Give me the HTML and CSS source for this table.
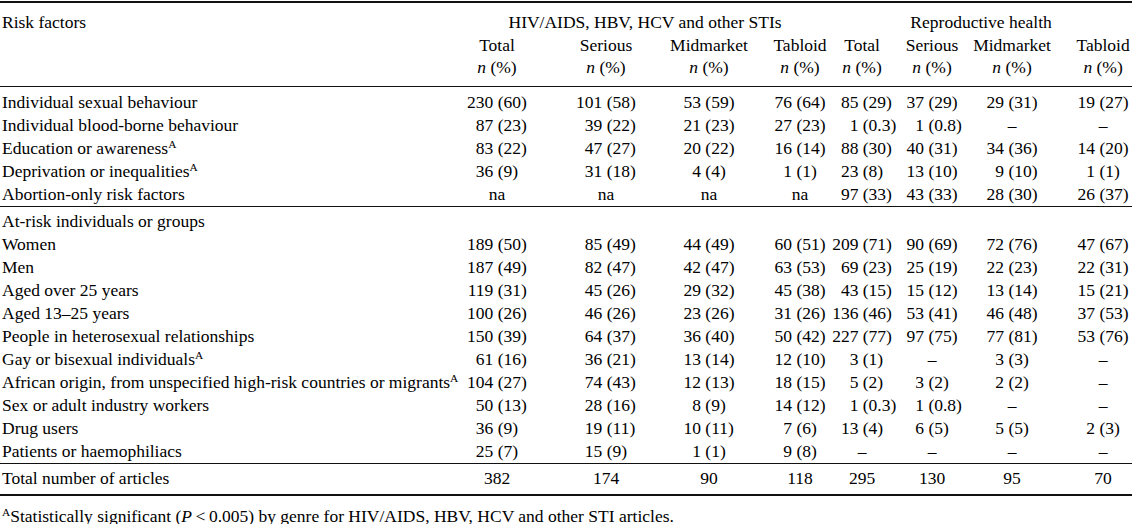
FILE: index.html
```html
<!DOCTYPE html>
<html>
<head>
<meta charset="utf-8">
<link rel="stylesheet" href="styles.css">
</head>
<body>
<table class="t">
<colgroup>
<col class="c0"><col class="c1"><col class="c2"><col class="c3"><col class="c4"><col class="c5"><col class="c6"><col class="c7"><col class="c8">
</colgroup>
<thead>
<tr class="h1">
<th class="lab">Risk factors</th>
<th colspan="4" class="grp">HIV/AIDS, HBV, HCV and other STIs</th>
<th colspan="4" class="grp">Reproductive health</th>
</tr>
<tr class="d h2">
<th></th><th>Total</th><th>Serious</th><th>Midmarket</th><th>Tabloid</th><th>Total</th><th>Serious</th><th>Midmarket</th><th>Tabloid</th>
</tr>
<tr class="d h3">
<th></th><th><i>n</i> (%)</th><th><i>n</i> (%)</th><th><i>n</i> (%)</th><th><i>n</i> (%)</th><th><i>n</i> (%)</th><th><i>n</i> (%)</th><th><i>n</i> (%)</th><th><i>n</i> (%)</th>
</tr>
</thead>
<tbody class="s1">
<tr class="d first">
<td>Individual sexual behaviour</td>
<td><span class="v"><span class="n">230</span><span class="p">(60)</span></span></td>
<td><span class="v"><span class="n">101</span><span class="p">(58)</span></span></td>
<td><span class="v"><span class="n">53</span><span class="p">(59)</span></span></td>
<td><span class="v"><span class="n">76</span><span class="p">(64)</span></span></td>
<td><span class="v"><span class="n">85</span><span class="p">(29)</span></span></td>
<td><span class="v"><span class="n">37</span><span class="p">(29)</span></span></td>
<td><span class="v"><span class="n">29</span><span class="p">(31)</span></span></td>
<td><span class="v"><span class="n">19</span><span class="p">(27)</span></span></td>
</tr>
<tr class="d">
<td>Individual blood-borne behaviour</td>
<td><span class="v"><span class="n">87</span><span class="p">(23)</span></span></td>
<td><span class="v"><span class="n">39</span><span class="p">(22)</span></span></td>
<td><span class="v"><span class="n">21</span><span class="p">(23)</span></span></td>
<td><span class="v"><span class="n">27</span><span class="p">(23)</span></span></td>
<td><span class="v"><span class="n">1</span><span class="p">(0.3)</span></span></td>
<td><span class="v"><span class="n">1</span><span class="p">(0.8)</span></span></td>
<td>–</td>
<td>–</td>
</tr>
<tr class="d">
<td>Education or awareness<sup>A</sup></td>
<td><span class="v"><span class="n">83</span><span class="p">(22)</span></span></td>
<td><span class="v"><span class="n">47</span><span class="p">(27)</span></span></td>
<td><span class="v"><span class="n">20</span><span class="p">(22)</span></span></td>
<td><span class="v"><span class="n">16</span><span class="p">(14)</span></span></td>
<td><span class="v"><span class="n">88</span><span class="p">(30)</span></span></td>
<td><span class="v"><span class="n">40</span><span class="p">(31)</span></span></td>
<td><span class="v"><span class="n">34</span><span class="p">(36)</span></span></td>
<td><span class="v"><span class="n">14</span><span class="p">(20)</span></span></td>
</tr>
<tr class="d">
<td>Deprivation or inequalities<sup>A</sup></td>
<td><span class="v"><span class="n">36</span><span class="p">(9)</span></span></td>
<td><span class="v"><span class="n">31</span><span class="p">(18)</span></span></td>
<td><span class="v"><span class="n">4</span><span class="p">(4)</span></span></td>
<td><span class="v"><span class="n">1</span><span class="p">(1)</span></span></td>
<td><span class="v"><span class="n">23</span><span class="p">(8)</span></span></td>
<td><span class="v"><span class="n">13</span><span class="p">(10)</span></span></td>
<td><span class="v"><span class="n">9</span><span class="p">(10)</span></span></td>
<td><span class="v"><span class="n">1</span><span class="p">(1)</span></span></td>
</tr>
<tr class="d">
<td>Abortion-only risk factors</td>
<td>na</td>
<td>na</td>
<td>na</td>
<td>na</td>
<td><span class="v"><span class="n">97</span><span class="p">(33)</span></span></td>
<td><span class="v"><span class="n">43</span><span class="p">(33)</span></span></td>
<td><span class="v"><span class="n">28</span><span class="p">(30)</span></span></td>
<td><span class="v"><span class="n">26</span><span class="p">(37)</span></span></td>
</tr>
</tbody>
<tbody class="s2">
<tr class="d first">
<td>At-risk individuals or groups</td>
<td></td><td></td><td></td><td></td><td></td><td></td><td></td><td></td>
</tr>
<tr class="d">
<td>Women</td>
<td><span class="v"><span class="n">189</span><span class="p">(50)</span></span></td>
<td><span class="v"><span class="n">85</span><span class="p">(49)</span></span></td>
<td><span class="v"><span class="n">44</span><span class="p">(49)</span></span></td>
<td><span class="v"><span class="n">60</span><span class="p">(51)</span></span></td>
<td><span class="v"><span class="n">209</span><span class="p">(71)</span></span></td>
<td><span class="v"><span class="n">90</span><span class="p">(69)</span></span></td>
<td><span class="v"><span class="n">72</span><span class="p">(76)</span></span></td>
<td><span class="v"><span class="n">47</span><span class="p">(67)</span></span></td>
</tr>
<tr class="d">
<td>Men</td>
<td><span class="v"><span class="n">187</span><span class="p">(49)</span></span></td>
<td><span class="v"><span class="n">82</span><span class="p">(47)</span></span></td>
<td><span class="v"><span class="n">42</span><span class="p">(47)</span></span></td>
<td><span class="v"><span class="n">63</span><span class="p">(53)</span></span></td>
<td><span class="v"><span class="n">69</span><span class="p">(23)</span></span></td>
<td><span class="v"><span class="n">25</span><span class="p">(19)</span></span></td>
<td><span class="v"><span class="n">22</span><span class="p">(23)</span></span></td>
<td><span class="v"><span class="n">22</span><span class="p">(31)</span></span></td>
</tr>
<tr class="d">
<td>Aged over 25 years</td>
<td><span class="v"><span class="n">119</span><span class="p">(31)</span></span></td>
<td><span class="v"><span class="n">45</span><span class="p">(26)</span></span></td>
<td><span class="v"><span class="n">29</span><span class="p">(32)</span></span></td>
<td><span class="v"><span class="n">45</span><span class="p">(38)</span></span></td>
<td><span class="v"><span class="n">43</span><span class="p">(15)</span></span></td>
<td><span class="v"><span class="n">15</span><span class="p">(12)</span></span></td>
<td><span class="v"><span class="n">13</span><span class="p">(14)</span></span></td>
<td><span class="v"><span class="n">15</span><span class="p">(21)</span></span></td>
</tr>
<tr class="d">
<td>Aged 13–25 years</td>
<td><span class="v"><span class="n">100</span><span class="p">(26)</span></span></td>
<td><span class="v"><span class="n">46</span><span class="p">(26)</span></span></td>
<td><span class="v"><span class="n">23</span><span class="p">(26)</span></span></td>
<td><span class="v"><span class="n">31</span><span class="p">(26)</span></span></td>
<td><span class="v"><span class="n">136</span><span class="p">(46)</span></span></td>
<td><span class="v"><span class="n">53</span><span class="p">(41)</span></span></td>
<td><span class="v"><span class="n">46</span><span class="p">(48)</span></span></td>
<td><span class="v"><span class="n">37</span><span class="p">(53)</span></span></td>
</tr>
<tr class="d">
<td>People in heterosexual relationships</td>
<td><span class="v"><span class="n">150</span><span class="p">(39)</span></span></td>
<td><span class="v"><span class="n">64</span><span class="p">(37)</span></span></td>
<td><span class="v"><span class="n">36</span><span class="p">(40)</span></span></td>
<td><span class="v"><span class="n">50</span><span class="p">(42)</span></span></td>
<td><span class="v"><span class="n">227</span><span class="p">(77)</span></span></td>
<td><span class="v"><span class="n">97</span><span class="p">(75)</span></span></td>
<td><span class="v"><span class="n">77</span><span class="p">(81)</span></span></td>
<td><span class="v"><span class="n">53</span><span class="p">(76)</span></span></td>
</tr>
<tr class="d">
<td>Gay or bisexual individuals<sup>A</sup></td>
<td><span class="v"><span class="n">61</span><span class="p">(16)</span></span></td>
<td><span class="v"><span class="n">36</span><span class="p">(21)</span></span></td>
<td><span class="v"><span class="n">13</span><span class="p">(14)</span></span></td>
<td><span class="v"><span class="n">12</span><span class="p">(10)</span></span></td>
<td><span class="v"><span class="n">3</span><span class="p">(1)</span></span></td>
<td>–</td>
<td><span class="v"><span class="n">3</span><span class="p">(3)</span></span></td>
<td>–</td>
</tr>
<tr class="d">
<td>African origin, from unspecified high-risk countries or migrants<sup>A</sup></td>
<td><span class="v"><span class="n">104</span><span class="p">(27)</span></span></td>
<td><span class="v"><span class="n">74</span><span class="p">(43)</span></span></td>
<td><span class="v"><span class="n">12</span><span class="p">(13)</span></span></td>
<td><span class="v"><span class="n">18</span><span class="p">(15)</span></span></td>
<td><span class="v"><span class="n">5</span><span class="p">(2)</span></span></td>
<td><span class="v"><span class="n">3</span><span class="p">(2)</span></span></td>
<td><span class="v"><span class="n">2</span><span class="p">(2)</span></span></td>
<td>–</td>
</tr>
<tr class="d">
<td>Sex or adult industry workers</td>
<td><span class="v"><span class="n">50</span><span class="p">(13)</span></span></td>
<td><span class="v"><span class="n">28</span><span class="p">(16)</span></span></td>
<td><span class="v"><span class="n">8</span><span class="p">(9)</span></span></td>
<td><span class="v"><span class="n">14</span><span class="p">(12)</span></span></td>
<td><span class="v"><span class="n">1</span><span class="p">(0.3)</span></span></td>
<td><span class="v"><span class="n">1</span><span class="p">(0.8)</span></span></td>
<td>–</td>
<td>–</td>
</tr>
<tr class="d">
<td>Drug users</td>
<td><span class="v"><span class="n">36</span><span class="p">(9)</span></span></td>
<td><span class="v"><span class="n">19</span><span class="p">(11)</span></span></td>
<td><span class="v"><span class="n">10</span><span class="p">(11)</span></span></td>
<td><span class="v"><span class="n">7</span><span class="p">(6)</span></span></td>
<td><span class="v"><span class="n">13</span><span class="p">(4)</span></span></td>
<td><span class="v"><span class="n">6</span><span class="p">(5)</span></span></td>
<td><span class="v"><span class="n">5</span><span class="p">(5)</span></span></td>
<td><span class="v"><span class="n">2</span><span class="p">(3)</span></span></td>
</tr>
<tr class="d">
<td>Patients or haemophiliacs</td>
<td><span class="v"><span class="n">25</span><span class="p">(7)</span></span></td>
<td><span class="v"><span class="n">15</span><span class="p">(9)</span></span></td>
<td><span class="v"><span class="n">1</span><span class="p">(1)</span></span></td>
<td><span class="v"><span class="n">9</span><span class="p">(8)</span></span></td>
<td>–</td>
<td>–</td>
<td>–</td>
<td>–</td>
</tr>
</tbody>
<tbody class="s3">
<tr class="d first">
<td>Total number of articles</td>
<td>382</td><td>174</td><td>90</td><td>118</td><td>295</td><td>130</td><td>95</td><td>70</td>
</tr>
</tbody>
</table>
<p class="note"><sup>A</sup>Statistically significant (<i>P</i>&#8201;&lt;&#8201;0.005) by genre for HIV/AIDS, HBV, HCV and other STI articles.</p>
</body>
</html>
```

FILE: styles.css
```css
html, body {
  margin: 0;
  padding: 0;
  background: #fff;
}
body {
  padding-top: 1px;
  font-family: "Liberation Serif", "Times New Roman", serif;
  font-size: 17.5px;
  color: #000;
}
.t {
  width: 1132px;
  border-collapse: collapse;
  table-layout: fixed;
  border-top: 2px solid #111;
}
.c0 { width: 460px; }
.c1 { width: 91.5px; }
.c2 { width: 106px; }
.c3 { width: 97px; }
.c4 { width: 75.5px; }
.c5 { width: 66px; }
.c6 { width: 76px; }
.c7 { width: 85.5px; }
.c8 { width: 74.5px; }

.t th, .t td {
  padding: 0;
  font-weight: normal;
  white-space: nowrap;
  text-align: center;
  vertical-align: top;
}
.t th:first-child, .t td:first-child {
  text-align: left;
  padding-left: 2px;
}
thead th { line-height: 22.5px; }
thead .h1 th { padding-top: 8px; }
thead .h3 th { padding-bottom: 7px; }
thead { border-bottom: 1px solid #111; }

tbody td { line-height: 23px; }
.s1 .first td { padding-top: 4px; }
.s1 { border-bottom: 1px solid #111; }
.s2 .first td { padding-top: 3px; }
.s2 { border-bottom: 1px solid #111; }
.s3 .first td { padding-top: 3px; padding-bottom: 4px; }
.s3 { border-bottom: 2px solid #111; }

/* column centre offsets */
.d > :nth-child(2) { padding-right: 17.5px; }
.d > :nth-child(3) { padding-left: 3px; }
.d > :nth-child(4) { padding-left: 6px; }
.d > :nth-child(5) { padding-left: 15.5px; }
.d > :nth-child(6) { padding-right: 2px; }
.d > :nth-child(7) { padding-right: 4px; }
.d > :nth-child(8) { padding-right: 5.5px; }
.d > :nth-child(9) { padding-left: 16.5px; }

.v {
  display: inline-flex;
  white-space: nowrap;
}
.n {
  display: inline-block;
  width: 1em;
  text-align: right;
  margin-right: 0.25em;
}
.p {
  display: inline-block;
  width: 1.667em;
  text-align: left;
}
.d > :nth-child(2) .n,
.d > :nth-child(3) .n,
.d > :nth-child(6) .n { width: 1.5em; }

sup {
  font-size: 0.65em;
  line-height: 0;
  vertical-align: 0.55em;
}
.note {
  margin: 9px 0 0 0;
  padding-left: 2px;
  line-height: 23px;
}
```
